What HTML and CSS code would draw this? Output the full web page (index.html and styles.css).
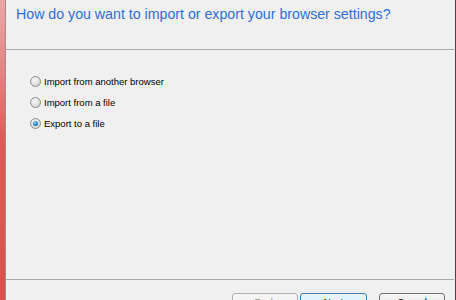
FILE: index.html
```html
<!DOCTYPE html>
<html>
<head>
	<link rel="stylesheet" href="styles.css">
</head>
<body>
	<div class="window">
		<div class="frame-left"></div>
		<div class="dialog">
			<div class="header">
				<h1>How do you want to import or export your browser settings?</h1>
			</div>
			<div class="content">
				<label class="option"><input type="radio" name="mode" value="browser"><span>Import from another browser</span></label>
				<label class="option"><input type="radio" name="mode" value="import"><span>Import from a file</span></label>
				<label class="option"><input type="radio" name="mode" value="export" checked><span>Export to a file</span></label>
			</div>
			<div class="footer">
				<div class="buttons">
					<button type="button" disabled>Back</button>
					<button type="button" class="default">Next</button>
				</div>
				<button type="button">Cancel</button>
			</div>
		</div>
		<div class="frame-right"></div>
	</div>
</body>
</html>
```

FILE: styles.css
```css
html, body {
	margin: 0;
	height: 100%;
	overflow: hidden;
}

body {
	background: #f0f0f0;
	font-family: "Liberation Sans", Arial, sans-serif;
	font-size: 9.5px;
	color: #000;
}

.window {
	display: flex;
	height: 100%;
}

.frame-left {
	width: 5px;
	flex: none;
	border-right: 1px solid #a08c8c;
	background: linear-gradient(to bottom, #eba7a7 0, #e58a88 60px, #dc5b56 140px, #d9524d 300px);
}

.frame-right {
	width: 1px;
	flex: none;
	background: #5e3c40;
}

.dialog {
	flex: 1;
	min-width: 0;
	display: flex;
	flex-direction: column;
}

.header {
	flex: none;
	height: 50px;
	box-sizing: border-box;
	padding: 6px 0 0 10px;
	border-bottom: 1px solid #a9a9a9;
	margin-right: 1px;
}

h1 {
	margin: 0;
	font-size: 14.2px;
	font-weight: normal;
	line-height: 16px;
	color: #2e6fd8;
}

.content {
	flex: none;
	height: 230px;
	box-sizing: border-box;
	padding: 25px 0 0 24px;
	display: flex;
	flex-direction: column;
	gap: 9px;
	border-bottom: 1px solid #a9a9a9;
	margin-right: 1px;
}

.option {
	display: flex;
	align-items: center;
	gap: 3px;
	height: 12px;
}

.option input {
	appearance: none;
	margin: 0;
	width: 11px;
	height: 11px;
	border-radius: 50%;
	border: 1px solid #8e8f8f;
	box-sizing: border-box;
	background: radial-gradient(circle at 40% 35%, #fcfcfc 0, #e4e4e4 45%, #c9c9c9 100%);
	display: grid;
	place-items: center;
}

.option input:checked::after {
	content: "";
	width: 5px;
	height: 5px;
	border-radius: 50%;
	background: radial-gradient(circle at 40% 35%, #8fd3f5 0, #2a8ad4 50%, #0c4d8e 100%);
}

.footer {
	flex: none;
	display: flex;
	justify-content: flex-end;
	align-items: flex-start;
	gap: 12px;
	padding: 13px 10px 0 0;
}

.buttons {
	display: flex;
	gap: 2px;
}

button {
	display: flex;
	justify-content: center;
	align-items: flex-start;
	width: 66px;
	height: 22px;
	padding: 2px 0 0;
	box-sizing: border-box;
	font-family: inherit;
	font-size: 9.5px;
	line-height: 12px;
	color: #000;
	border: 1px solid #707070;
	border-radius: 3px;
	background: linear-gradient(to bottom, #f6f6f6 0, #eaeaea 50%, #dddddd 51%, #cfcfcf 100%);
}

button:disabled {
	color: #8a8a8a;
	border-color: #adb2b5;
	background: #f4f4f4;
}

button.default {
	width: 67px;
	border-color: #3c7fb1;
	background: linear-gradient(to bottom, #eaf6fd 0, #d9f0fc 50%, #bee6fd 51%, #a7d9f5 100%);
}
```
